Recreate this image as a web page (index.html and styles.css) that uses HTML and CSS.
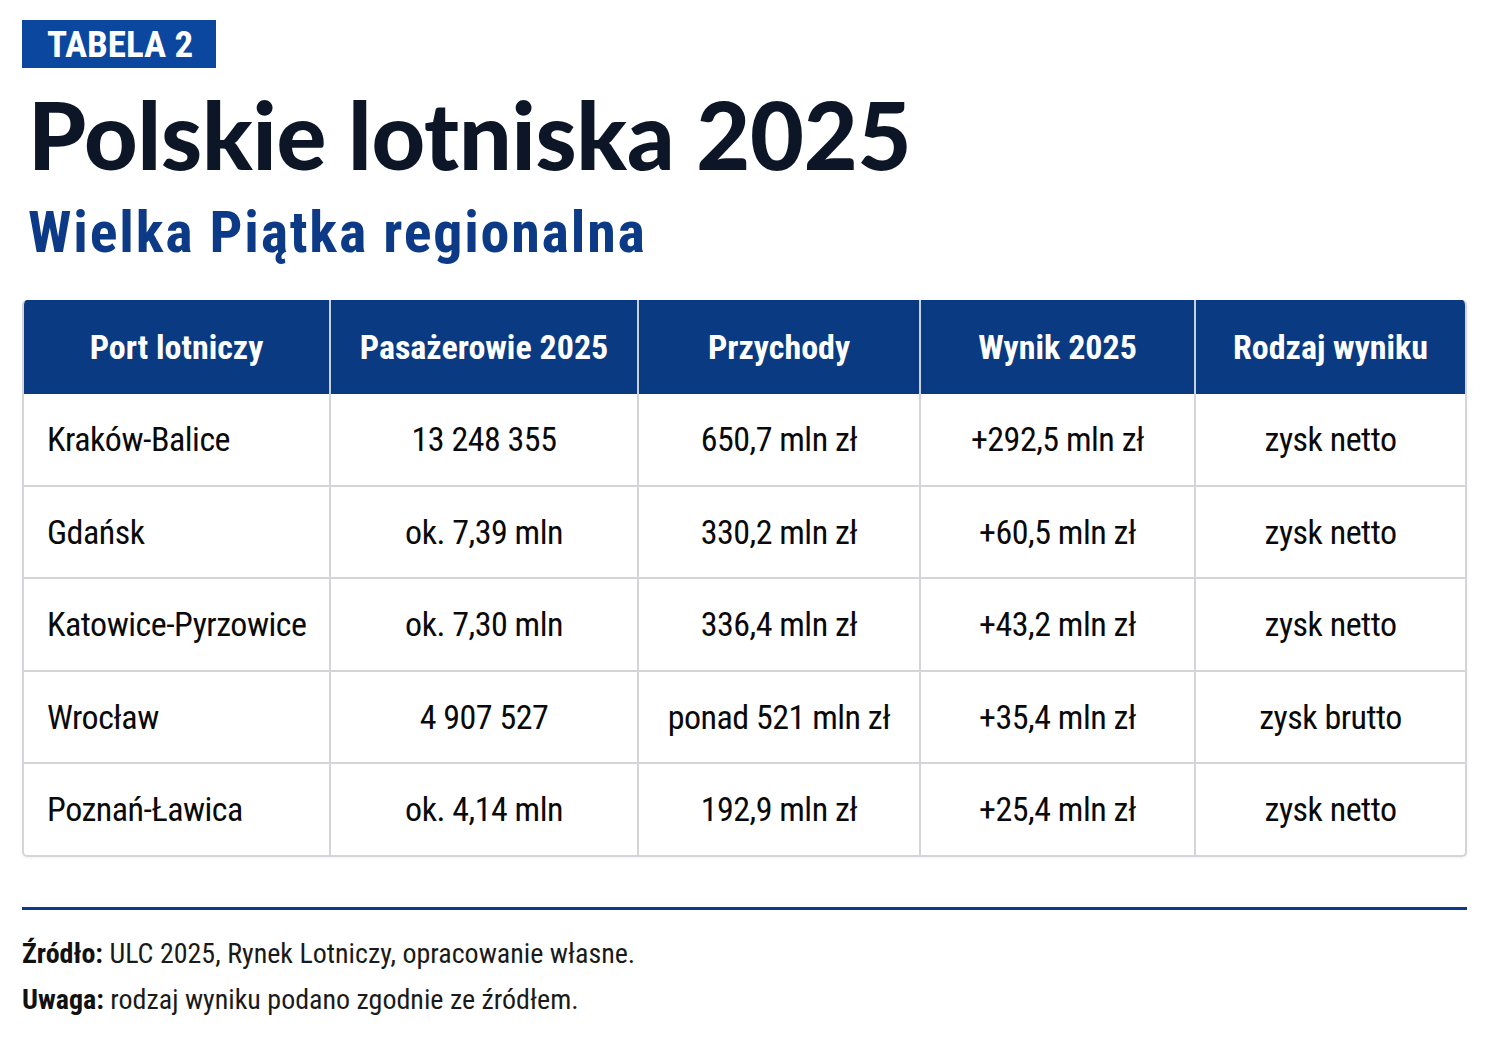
FILE: index.html
```html
<!DOCTYPE html>
<html lang="pl">
<head>
<meta charset="utf-8">
<title>Polskie lotniska 2025</title>
<link rel="stylesheet" href="styles.css">
</head>
<body>
<div class="page">
  <div class="badge">TABELA 2</div>
  <h1 class="title">Polskie lotniska 2025</h1>
  <h2 class="subtitle">Wielka Piątka regionalna</h2>

  <table class="data">
    <colgroup>
      <col class="c1"><col class="c2"><col class="c3"><col class="c4"><col class="c5">
    </colgroup>
    <thead>
      <tr>
        <th>Port lotniczy</th>
        <th>Pasażerowie 2025</th>
        <th>Przychody</th>
        <th>Wynik 2025</th>
        <th>Rodzaj wyniku</th>
      </tr>
    </thead>
    <tbody>
      <tr><td>Kraków-Balice</td><td>13 248 355</td><td>650,7 mln zł</td><td>+292,5 mln zł</td><td>zysk netto</td></tr>
      <tr><td>Gdańsk</td><td>ok. 7,39 mln</td><td>330,2 mln zł</td><td>+60,5 mln zł</td><td>zysk netto</td></tr>
      <tr><td>Katowice-Pyrzowice</td><td>ok. 7,30 mln</td><td>336,4 mln zł</td><td>+43,2 mln zł</td><td>zysk netto</td></tr>
      <tr><td>Wrocław</td><td>4 907 527</td><td>ponad 521 mln zł</td><td>+35,4 mln zł</td><td>zysk brutto</td></tr>
      <tr><td>Poznań-Ławica</td><td>ok. 4,14 mln</td><td>192,9 mln zł</td><td>+25,4 mln zł</td><td>zysk netto</td></tr>
    </tbody>
  </table>

  <div class="rule"></div>
  <p class="note"><b>Źródło:</b> ULC 2025, Rynek Lotniczy, opracowanie własne.</p>
  <p class="note"><b>Uwaga:</b> rodzaj wyniku podano zgodnie ze źródłem.</p>
</div>
</body>
</html>
```

FILE: styles.css
```css
html, body {
  margin: 0;
  padding: 0;
  background: #ffffff;
}

.page {
  padding: 20px 24px 0 22px;
  width: 1445px;
  font-family: "Roboto Condensed", Roboto, "Liberation Sans Narrow", "DejaVu Sans Condensed", sans-serif;
  font-stretch: condensed;
  color: #111111;
}

.badge {
  display: inline-flex;
  align-items: center;
  height: 48px;
  padding: 0 23px 0 25px;
  background: #0b479f;
  color: #ffffff;
  font-weight: bold;
  font-size: 37px;
  line-height: 1;
}

.title {
  margin: 16px 0 0 6px;
  font-family: Lato, Inter, "Liberation Sans", sans-serif;
  font-stretch: normal;
  font-weight: 900;
  font-size: 93px;
  line-height: 100px;
  letter-spacing: -0.2px;
  color: #0d1626;
}

.subtitle {
  margin: 16px 0 0 6px;
  font-weight: bold;
  font-size: 58px;
  line-height: 64px;
  letter-spacing: 1.8px;
  color: #0c3a87;
}

.data {
  margin-top: 36px;
  width: 1445px;
  border-collapse: separate;
  border-spacing: 0;
  table-layout: fixed;
  border: 2px solid #d3d5d9;
  border-top: none;
  border-radius: 5px;
  overflow: hidden;
  box-shadow: 0 1px 3px rgba(0,0,0,0.06);
}

.c1 { width: 305px; }
.c2 { width: 308px; }
.c3 { width: 282px; }
.c4 { width: 275px; }
.c5 { width: 271px; }

.data th {
  height: 94px;
  padding: 0;
  background: #0a3a82;
  color: #ffffff;
  font-weight: bold;
  font-size: 34px;
  text-align: center;
  white-space: nowrap;
  border-left: 2px solid #c9cfdb;
}

.data th:first-child,
.data td:first-child {
  border-left: none;
}

.data td {
  height: 90.5px;
  padding: 0;
  font-size: 34px;
  letter-spacing: -0.5px;
  color: #0a0a0a;
  text-align: center;
  white-space: nowrap;
  border-left: 2px solid #d3d5d9;
  border-top: 2px solid #d3d5d9;
}

.data tbody tr:first-child td {
  border-top: none;
}

.data td:first-child {
  text-align: left;
  padding-left: 23px;
}

.rule {
  margin-top: 50px;
  height: 3px;
  background: #0b3a8a;
}

.note {
  margin: 0;
  font-size: 28px;
  line-height: 46px;
  color: #1a1a1a;
}

.rule + .note {
  margin-top: 21px;
}

.note b {
  color: #111111;
}
```
